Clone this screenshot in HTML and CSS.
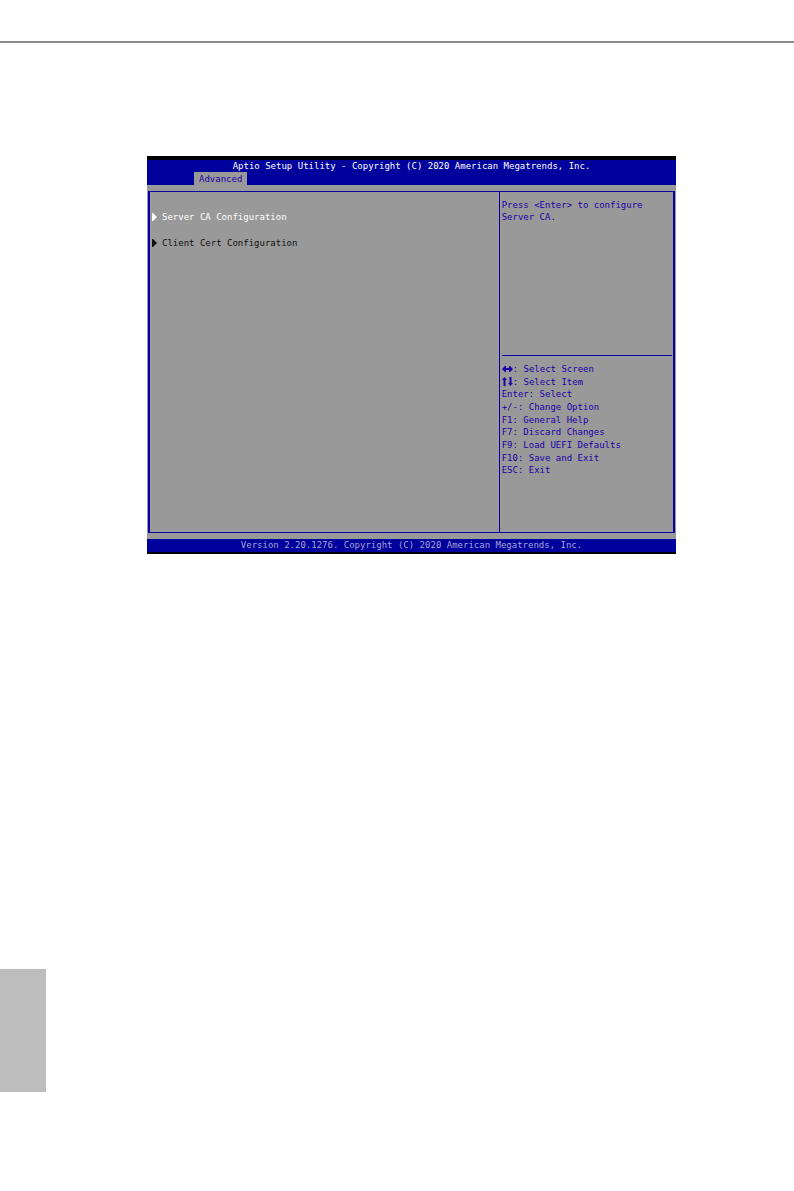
FILE: index.html
```html
<!DOCTYPE html>
<html lang="en">
  <head>
    <meta charset="UTF-8" />
    <meta name="viewport" content="width=device-width, initial-scale=1.0" />
    <title>Aptio Setup Utility</title>
    <link rel="stylesheet" href="styles.css">
  </head>
  <body>
    <hr class="page-rule" />

    <main class="screen">
      <header class="top-bar">
        <h1>Aptio Setup Utility - Copyright (C) 2020 American Megatrends, Inc.</h1>
        <button type="button" class="tab">Advanced</button>
      </header>

      <div class="content">
        <div class="frame">
          <nav class="menu">
            <a href="#server-ca" class="selected">
              <svg class="arrow" viewBox="0 0 5 8"><path d="M0 0H1L5 4L1 8H0Z" /></svg>
              Server CA Configuration
            </a>
            <a href="#client-cert">
              <svg class="arrow" viewBox="0 0 5 8"><path d="M0 0H1L5 4L1 8H0Z" /></svg>
              Client Cert Configuration
            </a>
          </nav>

          <aside class="side">
            <p class="help">Press &lt;Enter&gt; to configure Server CA.</p>
            <ul class="keys">
              <li>
                <svg class="key-icon" viewBox="0 0 11 9">
                  <path d="M0 5L3 2H4V4H7V2H8L11 5L8 8H7V6H4V8H3Z" />
                </svg>: Select Screen
              </li>
              <li>
                <svg class="key-icon" viewBox="0 0 11 9">
                  <path d="M0 3L2.5 0L5 3H3.5V9H1.5V3Z" />
                  <path d="M6 6H7.5V0H9.5V6H11L8.5 9Z" />
                </svg>: Select Item
              </li>
              <li>Enter: Select</li>
              <li>+/-: Change Option</li>
              <li>F1: General Help</li>
              <li>F7: Discard Changes</li>
              <li>F9: Load UEFI Defaults</li>
              <li>F10: Save and Exit</li>
              <li>ESC: Exit</li>
            </ul>
          </aside>
        </div>
      </div>

      <footer class="bottom-bar">Version 2.20.1276. Copyright (C) 2020 American Megatrends, Inc.</footer>
    </main>

    <div class="page-tab"></div>
  </body>
</html>
```

FILE: styles.css
```css
* {
  box-sizing: border-box;
}
body {
  display: flex;
  flex-direction: column;
  min-height: 100vh;
  margin: 0;
  background-color: #ffffff;
}
.page-rule {
  width: 100%;
  height: 2px;
  margin: 41px 0 113px;
  border: none;
  background-color: #8a8a8a;
}

.screen {
  margin: 0 118px 0 147px;
  border-top: 4px solid #000008;
  border-bottom: 2px solid #000008;
  background-color: #999999;
  color: #1c00a8;
  font-family: "DejaVu Sans Mono", monospace;
  font-size: 9px;
  line-height: 12px;
}
.top-bar {
  background-color: #00009c;
  color: #ffffff;
}
.top-bar h1 {
  margin: 0;
  font-size: 9px;
  font-weight: normal;
  text-align: center;
}
.tab {
  display: block;
  height: 13px;
  margin-left: 47px;
  padding: 0 5px;
  border: none;
  background-color: #999999;
  color: #1c00a8;
  font: inherit;
}

.content {
  padding: 6px 1px;
}
.frame {
  display: grid;
  grid-template-columns: 2fr 1fr;
  min-height: 342px;
  border: 1px solid #0c00a0;
  border-width: 1px 2px 1px 2px;
}
.menu {
  display: flex;
  flex-direction: column;
  gap: 14px;
  padding: 19px 2px;
}
.menu a {
  display: flex;
  align-items: center;
  gap: 5px;
  color: #101010;
  text-decoration: none;
}
.menu .selected {
  color: #ffffff;
}
.arrow {
  width: 5px;
  height: 8px;
  fill: currentColor;
}

.side {
  display: flex;
  flex-direction: column;
  border-left: 1px solid #0c00a0;
  padding: 0 1px 0 2px;
}
.help {
  height: 164px;
  margin: 0;
  padding-top: 7px;
  border-bottom: 1px solid #0c00a0;
}
.keys {
  display: flex;
  flex-direction: column;
  height: 114px;
  margin: 7px 0 0;
  padding: 0;
  list-style-type: none;
}
.keys li {
  flex: 1;
}
.key-icon {
  width: 11px;
  height: 9px;
  fill: currentColor;
  vertical-align: -1px;
}
.bottom-bar {
  height: 13px;
  background-color: #00009c;
  color: #a4a4d4;
  line-height: 13px;
  text-align: center;
}

/* grey thumb index at the page edge */
.page-tab {
  width: 46px;
  height: 123px;
  margin: auto 0 99px;
  background-color: #bdbdbd;
}
```
